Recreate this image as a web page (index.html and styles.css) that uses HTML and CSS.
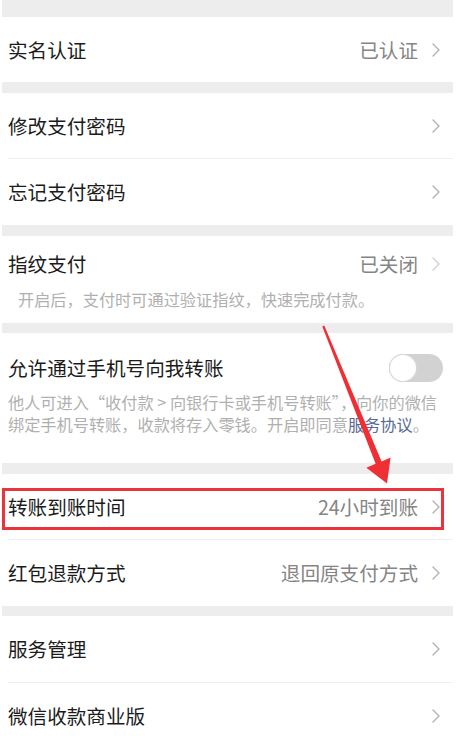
FILE: index.html
```html
<!DOCTYPE html>
<html lang="zh-CN">
<head>
<meta charset="utf-8">
<title>支付管理</title>
<link rel="stylesheet" href="styles.css">
</head>
<body>
<div class="page">
  <div class="band band-top"></div>

  <div class="group">
    <div class="row">
      <span class="title">实名认证</span>
      <span class="value">已认证</span>
      <svg class="chev" viewBox="0 0 8 14"><path d="M1 1 L7 7 L1 13"/></svg>
    </div>
  </div>

  <div class="band"></div>

  <div class="group">
    <div class="row">
      <span class="title">修改支付密码</span>
      <svg class="chev" viewBox="0 0 8 14"><path d="M1 1 L7 7 L1 13"/></svg>
    </div>
    <div class="divider"></div>
    <div class="row row-tall">
      <span class="title">忘记支付密码</span>
      <svg class="chev" viewBox="0 0 8 14"><path d="M1 1 L7 7 L1 13"/></svg>
    </div>
  </div>

  <div class="band"></div>

  <div class="group section-finger">
    <div class="line">
      <span class="title">指纹支付</span>
      <span class="value">已关闭</span>
      <svg class="chev chev-faint" viewBox="0 0 8 14"><path d="M1 1 L7 7 L1 13"/></svg>
    </div>
    <p class="desc desc-indent">开启后，支付时可通过验证指纹，快速完成付款。</p>
  </div>

  <div class="band band-10"></div>

  <div class="group section-phone">
    <div class="line">
      <span class="title">允许通过手机号向我转账</span>
      <span class="toggle"><span class="knob"></span></span>
    </div>
    <p class="desc">他人可进入“收付款 &gt; 向银行卡或手机号转账”，向你的微信绑定手机号转账，收款将存入零钱。开启即同意<span class="link">服务协议</span>。</p>
  </div>

  <div class="band"></div>

  <div class="group">
    <div class="row highlight-row">
      <span class="title">转账到账时间</span>
      <span class="value">24小时到账</span>
      <svg class="chev" viewBox="0 0 8 14"><path d="M1 1 L7 7 L1 13"/></svg>
      <div class="highlight"></div>
    </div>
    <div class="divider"></div>
    <div class="row row-tall">
      <span class="title">红包退款方式</span>
      <span class="value">退回原支付方式</span>
      <svg class="chev" viewBox="0 0 8 14"><path d="M1 1 L7 7 L1 13"/></svg>
    </div>
  </div>

  <div class="band band-10"></div>

  <div class="group">
    <div class="row row-tall">
      <span class="title">服务管理</span>
      <svg class="chev" viewBox="0 0 8 14"><path d="M1 1 L7 7 L1 13"/></svg>
    </div>
    <div class="divider"></div>
    <div class="row">
      <span class="title">微信收款商业版</span>
      <svg class="chev" viewBox="0 0 8 14"><path d="M1 1 L7 7 L1 13"/></svg>
    </div>
    <div class="divider"></div>
  </div>

  <svg class="arrow" viewBox="0 0 461 748" width="461" height="748">
    <polygon points="322.3,326.4 324.3,325.6 381.6,461.4 390.6,457.4 387,483.5 366.4,467.8 375.6,463.8"/>
  </svg>
</div>
</body>
</html>
```

FILE: styles.css
```css
html, body {
  margin: 0;
  padding: 0;
  background: #ffffff;
}

body {
  font-family: "Noto Sans CJK SC", "Noto Sans", sans-serif;
  color: #1b1b1b;
}

.page {
  position: relative;
  width: 451px;
  height: 748px;
  margin-left: 2px;
  overflow: hidden;
}

.band {
  height: 11px;
  background: #ededed;
}

.band-top {
  height: 17px;
}

.band-10 {
  height: 10px;
}

.group {
  background: #ffffff;
}

.row {
  position: relative;
  display: flex;
  align-items: center;
  height: 65px;
  padding: 0 13px 0 6px;
}

.row-tall {
  height: 66px;
}

.line {
  display: flex;
  align-items: center;
  height: 28px;
  padding: 0 13px 0 6px;
}

.title {
  font-size: 19.6px;
  line-height: 28px;
  color: #1b1b1b;
  flex: 1;
  white-space: nowrap;
}

.value {
  font-size: 19.6px;
  line-height: 28px;
  color: #858585;
  margin-right: 14px;
  white-space: nowrap;
}

.chev {
  width: 8px;
  height: 14px;
  flex: none;
}

.chev path {
  fill: none;
  stroke: #b3b3b3;
  stroke-width: 1.4;
  stroke-linecap: round;
  stroke-linejoin: round;
}

.chev-faint path {
  stroke: #d0d0d0;
}

.divider {
  height: 1px;
  margin-left: 6px;
  background: #efefef;
}

.section-finger {
  padding: 14px 0 13px;
}

.section-finger .desc {
  margin-top: 10px;
}

.section-phone {
  padding: 21px 0 28px;
}

.section-phone .desc {
  margin-top: 9px;
  padding-right: 14px;
}

.desc {
  margin: 0;
  padding-left: 6px;
  font-size: 16.2px;
  line-height: 22px;
  color: #b0b0b0;
}

.desc-indent {
  padding-left: 16px;
}

.link {
  color: #576b95;
}

.toggle {
  position: relative;
  flex: none;
  width: 54px;
  height: 28px;
  border-radius: 14px;
  background: #d2d2d2;
  margin-right: -3px;
}

.knob {
  position: absolute;
  left: 1px;
  top: 1px;
  width: 26px;
  height: 26px;
  border-radius: 50%;
  background: #ffffff;
  box-shadow: 0 0 0 1px #d8d8d8;
}

.highlight {
  position: absolute;
  left: 0;
  top: 14px;
  width: 442px;
  height: 42px;
  box-sizing: border-box;
  border: 3px solid #e8343a;
  pointer-events: none;
}

.arrow {
  position: absolute;
  left: -2px;
  top: 0;
  pointer-events: none;
}

.arrow polygon {
  fill: #ef2f34;
}
```
